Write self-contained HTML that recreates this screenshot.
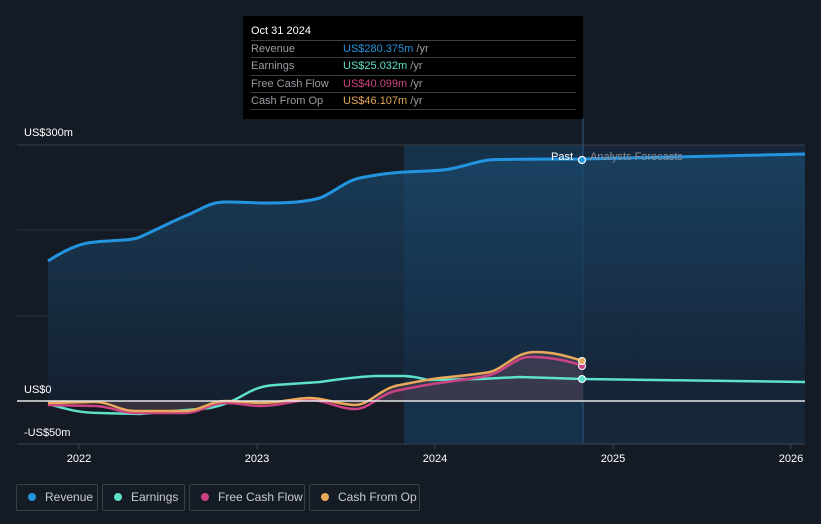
<!DOCTYPE html>
<html><head><style>
body{margin:0;width:821px;height:524px;background:#151b24;font-family:"Liberation Sans",sans-serif;overflow:hidden;position:relative}
.tt{position:absolute;left:243px;top:16px;width:340px;height:103px;background:#000}
.tt .d{position:absolute;left:8px;top:9px;color:#fff;font-size:11px}
.row{position:absolute;left:8px;width:325px;height:17px;border-top:1px solid #3a3f46;font-size:11px;color:#9a9ea4;line-height:17px}
.row span{position:absolute;left:92px}
.lg{position:absolute;top:484px;height:27px;border:1px solid #3a3f46;border-radius:2px;color:#c8ccd0;font-size:12px;line-height:25px;box-sizing:border-box;white-space:nowrap}
.lg i{position:absolute;left:11px;top:8px;width:8px;height:8px;border-radius:50%}
.lg b{font-weight:normal;position:absolute;left:27px}
</style></head><body>
<svg width="821" height="524" style="position:absolute;left:0;top:0">
<defs><linearGradient id="g" x1="0" y1="0" x2="0" y2="1"><stop offset="0" stop-color="#1b4a6e" stop-opacity=".7"/><stop offset="1" stop-color="#142235" stop-opacity=".7"/></linearGradient></defs>
<rect x="404" y="145" width="179" height="299" fill="#16314a"/>
<rect x="583" y="145" width="222" height="299" fill="#18263a"/>
<line x1="17" y1="145" x2="805" y2="145" stroke="#3b424b"/>
<line x1="17" y1="230" x2="805" y2="230" stroke="#2a323c"/>
<line x1="17" y1="316" x2="805" y2="316" stroke="#2a323c"/>
<line x1="583" y1="118" x2="583" y2="444" stroke="#2a5a80"/>
<path d="M48,261 C65,250 80,243 95,242 C115,240 130,241 140,237 C160,228 175,220 190,214 C205,207 212,202 225,202 C245,202 255,203 265,203 C290,203 305,202 320,198 C335,192 345,181 360,178 C380,174 390,173 405,172 C425,171 440,171 450,169 C470,165 480,160 495,159.5 C530,159 560,159 583,159 L805,154 L805,401 L48,401 Z" fill="url(#g)"/>
<path d="M48,261 C65,250 80,243 95,242 C115,240 130,241 140,237 C160,228 175,220 190,214 C205,207 212,202 225,202 C245,202 255,203 265,203 C290,203 305,202 320,198 C335,192 345,181 360,178 C380,174 390,173 405,172 C425,171 440,171 450,169 C470,165 480,160 495,159.5 C530,159 560,159 583,159 L805,154" fill="none" stroke="#2394df" stroke-width="3"/>
<path d="M48,403 L95,402 C110,402 120,410 135,411 L185,411 C200,411 210,401 225,401 C240,401 250,403 260,403 C280,403 295,398 310,398 C325,398 340,405 355,405 C370,405 380,388 400,385 C420,381 430,379 440,378 C460,376 480,374 490,372 C505,368 515,352 535,352 C555,352 570,357 583,361 L583,401 L48,401 Z" fill="#7a5a6a" fill-opacity=".35"/>
<path d="M48,404 C70,410 80,413 100,413 L140,414 L210,408 C225,405 232,401 240,397 C252,390 260,386 275,385 L320,382 C340,379 355,377 375,376 L405,376 C420,377 425,380 430,380 L480,379 L520,377 L583,379 L805,382" fill="none" stroke="#5de1c9" stroke-width="2.5"/>
<path d="M48,405 L95,406 C110,406 120,413 135,413 L185,413 C200,413 210,403 225,403 C240,403 250,406 260,406 C280,406 295,400 310,400 C325,400 340,409 355,409 C370,409 380,393 400,390 C420,386 430,384 440,383 C460,380 480,378 490,375 C505,371 515,357 530,357 C550,357 570,361 583,366" fill="none" stroke="#cc4385" stroke-width="2.5"/>
<path d="M48,403 L95,402 C110,402 120,411 135,411 L185,411 C200,411 210,401 225,401 C240,401 250,403 260,403 C280,403 295,398 310,398 C325,398 340,405 355,405 C370,405 380,388 400,385 C420,381 430,379 440,378 C460,376 480,374 490,372 C505,368 515,352 535,352 C555,352 570,357 583,361" fill="none" stroke="#e8a95a" stroke-width="2.5"/>
<line x1="17" y1="401" x2="805" y2="401" stroke="#e6e6e6" stroke-width="1.5"/>
<line x1="17" y1="444" x2="805" y2="444" stroke="#3b424b"/>
<circle cx="582" cy="160" r="3.5" fill="#2394df" stroke="#fff" stroke-width="1.2"/>
<circle cx="582" cy="379" r="3.5" fill="#5de1c9" stroke="#fff" stroke-width="1"/>
<circle cx="582" cy="366" r="3.5" fill="#cc4385" stroke="#fff" stroke-width="1"/>
<circle cx="582" cy="361" r="3.5" fill="#e8a95a" stroke="#fff" stroke-width="1"/>
<g font-size="11" fill="#fff"><text x="24" y="136">US$300m</text><text x="24" y="393">US$0</text><text x="24" y="436">-US$50m</text>
<text x="551" y="160">Past</text><text x="590" y="160" fill="#8a9099">Analysts Forecasts</text>
<text x="79" y="462" text-anchor="middle">2022</text><text x="257" y="462" text-anchor="middle">2023</text><text x="435" y="462" text-anchor="middle">2024</text><text x="613" y="462" text-anchor="middle">2025</text><text x="791" y="462" text-anchor="middle">2026</text></g>
<g stroke="#3b424b"><line x1="79" y1="444" x2="79" y2="449"/><line x1="257" y1="444" x2="257" y2="449"/><line x1="435" y1="444" x2="435" y2="449"/><line x1="613" y1="444" x2="613" y2="449"/><line x1="791" y1="444" x2="791" y2="449"/></g>
</svg>
<div class="tt"><div class="d">Oct 31 2024</div>
<div class="row" style="top:24px">Revenue<span><span style="position:static;color:#2394df">US$280.375m</span> /yr</span></div>
<div class="row" style="top:41px">Earnings<span><span style="position:static;color:#5de1c9">US$25.032m</span> /yr</span></div>
<div class="row" style="top:59px">Free Cash Flow<span><span style="position:static;color:#cc4385">US$40.099m</span> /yr</span></div>
<div class="row" style="top:76px">Cash From Op<span><span style="position:static;color:#e8a95a">US$46.107m</span> /yr</span></div>
<div class="row" style="top:93px;height:0"></div>
</div>
<div class="lg" style="left:16px;width:82px"><i style="background:#2394df"></i><b style="left:28px">Revenue</b></div>
<div class="lg" style="left:102px;width:83px"><i style="background:#5de1c9"></i><b style="left:28px">Earnings</b></div>
<div class="lg" style="left:189px;width:116px"><i style="background:#cc4385"></i><b style="left:28px">Free Cash Flow</b></div>
<div class="lg" style="left:309px;width:111px"><i style="background:#e8a95a"></i><b style="left:28px">Cash From Op</b></div>
</body></html>
